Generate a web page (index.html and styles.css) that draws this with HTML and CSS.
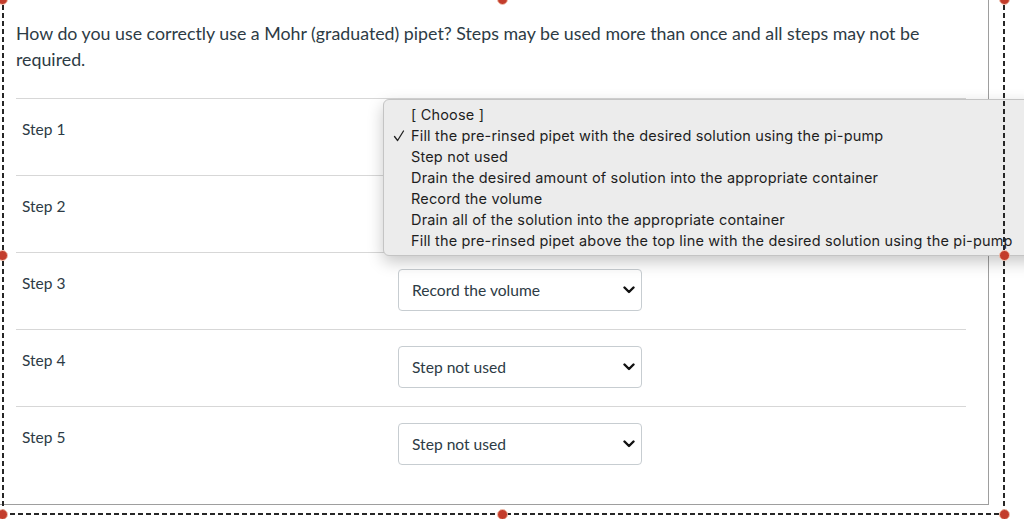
FILE: index.html
```html
<!DOCTYPE html>
<html lang="en">
<head>
    <meta charset="UTF-8">
    <title>Mohr pipet question</title>
    <link rel="stylesheet" href="styles.css">
</head>
<body>

    <div class="page">
        <div class="card">
            <p class="question">How do you use correctly use a Mohr (graduated) pipet? Steps may be used more than once and all steps may not be required.</p>

            <div class="steps">
                <div class="step-row">
                    <div class="step-label">Step 1</div>
                    <div class="select">
                        <span>Fill the pre-rinsed pipet</span>
                        <svg class="chevron" width="12" height="8" viewBox="0 0 12 8"><path d="M1.5 1.5 L6 6 L10.5 1.5" fill="none" stroke="#111" stroke-width="2.4" stroke-linecap="round" stroke-linejoin="round"/></svg>
                    </div>
                </div>
                <div class="step-row">
                    <div class="step-label">Step 2</div>
                    <div class="select">
                        <span>Step not used</span>
                        <svg class="chevron" width="12" height="8" viewBox="0 0 12 8"><path d="M1.5 1.5 L6 6 L10.5 1.5" fill="none" stroke="#111" stroke-width="2.4" stroke-linecap="round" stroke-linejoin="round"/></svg>
                    </div>
                </div>
                <div class="step-row">
                    <div class="step-label">Step 3</div>
                    <div class="select">
                        <span>Record the volume</span>
                        <svg class="chevron" width="12" height="8" viewBox="0 0 12 8"><path d="M1.5 1.5 L6 6 L10.5 1.5" fill="none" stroke="#111" stroke-width="2.4" stroke-linecap="round" stroke-linejoin="round"/></svg>
                    </div>
                </div>
                <div class="step-row">
                    <div class="step-label">Step 4</div>
                    <div class="select">
                        <span>Step not used</span>
                        <svg class="chevron" width="12" height="8" viewBox="0 0 12 8"><path d="M1.5 1.5 L6 6 L10.5 1.5" fill="none" stroke="#111" stroke-width="2.4" stroke-linecap="round" stroke-linejoin="round"/></svg>
                    </div>
                </div>
                <div class="step-row">
                    <div class="step-label">Step 5</div>
                    <div class="select">
                        <span>Step not used</span>
                        <svg class="chevron" width="12" height="8" viewBox="0 0 12 8"><path d="M1.5 1.5 L6 6 L10.5 1.5" fill="none" stroke="#111" stroke-width="2.4" stroke-linecap="round" stroke-linejoin="round"/></svg>
                    </div>
                </div>
            </div>
        </div>

        <!-- menu aberto do Step 1 -->
        <ul class="menu">
            <li>[ Choose ]</li>
            <li>
                <svg class="check" width="12" height="12" viewBox="0 0 12 12"><path d="M1.5 6.5 L4.6 10.5 L10.5 1" fill="none" stroke="#222" stroke-width="1.3" stroke-linecap="round" stroke-linejoin="round"/></svg>
                Fill the pre-rinsed pipet with the desired solution using the pi-pump
            </li>
            <li>Step not used</li>
            <li>Drain the desired amount of solution into the appropriate container</li>
            <li>Record the volume</li>
            <li>Drain all of the solution into the appropriate container</li>
            <li>Fill the pre-rinsed pipet above the top line with the desired solution using the pi-pump</li>
        </ul>

        <!-- moldura de recorte -->
        <div class="crop-frame">
            <span class="handle h-tl"></span>
            <span class="handle h-tm"></span>
            <span class="handle h-tr"></span>
            <span class="handle h-ml"></span>
            <span class="handle h-mr"></span>
            <span class="handle h-bl"></span>
            <span class="handle h-bm"></span>
            <span class="handle h-br"></span>
        </div>
    </div>

</body>
</html>
```

FILE: styles.css
```css
* {
    margin: 0;
    padding: 0;
    box-sizing: border-box;
}

body {
    background: #fff;
    font-family: Lato, "Open Sans", sans-serif;
    color: #2d3b45;
    overflow: hidden;
}

.page {
    position: relative;
    width: 1024px;
    height: 519px;
}

.card {
    width: 989px;
    height: 505px;
    border-right: 1px solid #9e9e9e;
    border-bottom: 1px solid #9e9e9e;
    padding: 20px 0 0 16px;
}

.question {
    font-size: 17.8px;
    line-height: 26px;
    width: 940px;
    margin-bottom: 26px;
}

.steps {
    width: 950px;
}

.step-row {
    display: flex;
    height: 77px;
    border-top: 1px solid #d7d7d7;
}

.step-label {
    width: 382px;
    padding: 20px 0 0 6px;
    font-size: 15.5px;
    line-height: 20px;
}

.select {
    display: flex;
    align-items: center;
    justify-content: space-between;
    width: 244px;
    height: 42px;
    margin-top: 16px;
    padding: 0 6px 0 13px;
    border: 1px solid #c7cdd1;
    border-radius: 4px;
    background: #fff;
    font-size: 15.6px;
    white-space: nowrap;
    overflow: hidden;
}

.select span {
    overflow: hidden;
}

.chevron {
    flex-shrink: 0;
    margin-left: 6px;
}

.menu {
    position: absolute;
    left: 383px;
    top: 99px;
    width: 660px;
    height: 157px;
    padding: 4px 0 0 27px;
    list-style: none;
    background: #ececec;
    border: 1px solid #c4c4c4;
    border-radius: 6px;
    box-shadow: 0 6px 16px rgba(0, 0, 0, 0.22);
    font-family: Inter, "Noto Sans", sans-serif;
    font-size: 14.5px;
    letter-spacing: 0.17px;
    line-height: 21px;
    color: #1e1e1e;
    white-space: nowrap;
}

.menu li {
    position: relative;
}

.check {
    position: absolute;
    left: -18px;
    top: 5px;
}

.crop-frame {
    position: absolute;
    left: 2px;
    top: -3px;
    width: 1003px;
    height: 518px;
    background:
        repeating-linear-gradient(90deg, #262626 0 5px, transparent 5px 8px) bottom left / 100% 2px no-repeat,
        repeating-linear-gradient(180deg, #262626 0 5px, transparent 5px 8px) top left / 2px 100% no-repeat,
        repeating-linear-gradient(180deg, #262626 0 5px, transparent 5px 8px) top right / 2px 100% no-repeat;
}

.handle {
    position: absolute;
    width: 11px;
    height: 11px;
    border-radius: 50%;
    background: #c33d2c;
    border: 1px solid #f2c3b0;
}

.h-tl { left: -5px; top: -3px; }
.h-tm { left: 495px; top: -3px; }
.h-tr { right: -5px; top: -3px; }
.h-ml { left: -5px; top: 253px; }
.h-mr { right: -5px; top: 253px; }
.h-bl { left: -5px; bottom: -5px; }
.h-bm { left: 495px; bottom: -5px; }
.h-br { right: -5px; bottom: -5px; }
```
